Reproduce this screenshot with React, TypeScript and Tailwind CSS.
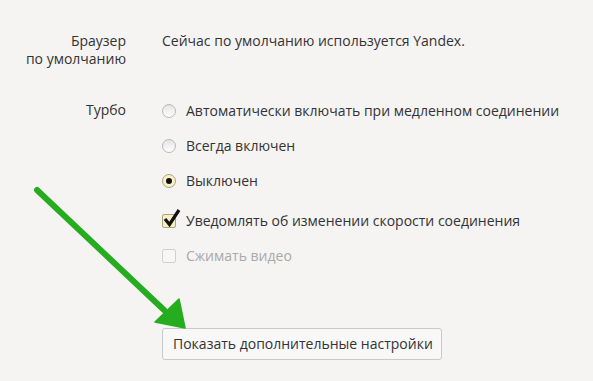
import React from 'react';

type OptionProps = {
    label: string;
    checked?: boolean;
    disabled?: boolean;
}

const Radio: React.FC<OptionProps> = ({ label, checked }) => (
    <div className="flex items-center h-[35px]">
        <span
            className={`w-[14px] h-[14px] rounded-full border flex items-center justify-center ${
                checked
                    ? 'border-[#ada27c] bg-[#faf0cb]'
                    : 'border-[#b8b8b8] bg-gradient-to-b from-[#e4e4e4] to-white'
            }`}
        >
            {checked && <span className="w-[6px] h-[6px] rounded-full bg-[#111]" />}
        </span>
        <span className="ml-[10px]">{label}</span>
    </div>
);

const Checkbox: React.FC<OptionProps> = ({ label, checked, disabled }) => (
    <div className={`flex items-center h-[35px] ${disabled ? 'text-[#a9a9a9]' : ''}`}>
        <span
            className={`relative w-[14px] h-[14px] rounded-[2px] border ${
                checked ? 'border-[#aea47a] bg-[#f8eec6]' : 'border-[#d0d0d0] bg-[#f7f7f7]'
            }`}
        >
            {checked && (
                <svg className="absolute left-[0px] top-[-7px]" width="19" height="20" viewBox="0 0 19 20">
                    <path d="M2 11 L6.5 16.5 L16 2" fill="none" stroke="#111" strokeWidth="3.2" strokeLinejoin="miter" />
                </svg>
            )}
        </span>
        <span className="ml-[10px]">{label}</span>
    </div>
);

const App: React.FC = () => {
    return (
        <div
            className="relative w-[593px] h-[381px] overflow-hidden bg-[#f5f4f3] text-[#333] text-[14px] leading-[18px]"
            style={{ fontFamily: '"Segoe UI", "Open Sans", "Noto Sans", sans-serif' }}
        >
            <div className="pt-[32px]">
                <div className="flex">
                    <div className="w-[126px] text-right">
                        Браузер<br />по умолчанию
                    </div>
                    <div className="ml-[36px]">Сейчас по умолчанию используется Yandex.</div>
                </div>

                <div className="flex mt-[25px]">
                    <div className="w-[126px] text-right pt-[8px]">Турбо</div>
                    <div className="ml-[36px]">
                        <Radio label="Автоматически включать при медленном соединении" />
                        <Radio label="Всегда включен" />
                        <Radio label="Выключен" checked />
                        <div className="mt-[5px]">
                            <Checkbox label="Уведомлять об изменении скорости соединения" checked />
                            <Checkbox label="Сжимать видео" disabled />
                        </div>
                    </div>
                </div>

                <div className="ml-[162px] mt-[55px]">
                    <button className="w-[280px] h-[32px] text-left pl-[10px] border border-[#c9c9c9] rounded-[3px] bg-[#f8f8f8]">
                        Показать дополнительные настройки
                    </button>
                </div>
            </div>

            {/* green arrow pointing at the button */}
            <svg className="absolute left-0 top-0 pointer-events-none" width="593" height="381">
                <line x1="37" y1="190" x2="164" y2="310" stroke="#26ad1f" strokeWidth="6" strokeLinecap="round" />
                <polygon points="185,328 155,322 179,299" fill="#26ad1f" stroke="#26ad1f" strokeWidth="1.5" strokeLinejoin="round" />
            </svg>
        </div>
    );
};

export default App;
